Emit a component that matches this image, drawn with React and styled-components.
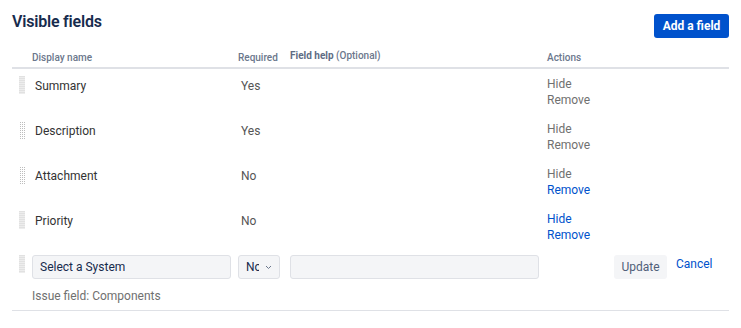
import React from "react";
import styled, { createGlobalStyle } from "styled-components";

const GlobalStyle = createGlobalStyle`
  body {
    margin: 0;
    background: #ffffff;
    font-family: Roboto, "Liberation Sans", Arial, sans-serif;
  }
`;

const COLUMNS = "20px 206px 52px 257px 1fr";

const fields = [
  { name: "Summary", required: "Yes", handle: "solid", hide: false, remove: false },
  { name: "Description", required: "Yes", handle: "dotted", hide: false, remove: false },
  { name: "Attachment", required: "No", handle: "dotted", hide: false, remove: true },
  { name: "Priority", required: "No", handle: "solid", hide: true, remove: true },
];

const App = () => {
  return (
    <Page>
      <GlobalStyle />
      <TopBar>
        <Title>Visible fields</Title>
        <PrimaryButton>Add a field</PrimaryButton>
      </TopBar>

      <HeaderRow>
        <span />
        <HeadCell>Display name</HeadCell>
        <HeadCell>Required</HeadCell>
        <HeadCell raised>
          <strong>Field help</strong> (Optional)
        </HeadCell>
        <HeadCell>Actions</HeadCell>
      </HeaderRow>

      {fields.map((f) => (
        <FieldRow key={f.name}>
          <Handle variant={f.handle} />
          <NameCell>{f.name}</NameCell>
          <RequiredCell>{f.required}</RequiredCell>
          <span />
          <Actions>
            <ActionLink active={f.hide}>Hide</ActionLink>
            <ActionLink active={f.remove}>Remove</ActionLink>
          </Actions>
        </FieldRow>
      ))}

      <EditRow>
        <Handle variant="solid" />
        <SelectBox wide>
          <SelectText>Select a System</SelectText>
        </SelectBox>
        <SelectBox>
          <SelectText clip>No</SelectText>
          <svg width="7" height="5" viewBox="0 0 7 5">
            <polyline
              points="1,1 3.5,3.5 6,1"
              fill="none"
              stroke="#6B778C"
              strokeWidth="1"
            />
          </svg>
        </SelectBox>
        <TextInput />
        <EditActions>
          <SecondaryButton>Update</SecondaryButton>
          <TextLink>Cancel</TextLink>
        </EditActions>
        <Hint>Issue field: Components</Hint>
      </EditRow>
    </Page>
  );
};

const Page = styled.div`
  padding: 0 12px;
  width: 717px;
`;

const TopBar = styled.div`
  display: flex;
  justify-content: space-between;
  align-items: flex-start;
  padding-top: 12px;
`;

const Title = styled.h2`
  margin: 0;
  font-size: 16px;
  line-height: 20px;
  font-weight: 600;
  letter-spacing: -0.2px;
  color: #172b4d;
`;

const PrimaryButton = styled.button`
  margin-top: 2px;
  height: 24px;
  width: 75px;
  padding: 0;
  border: none;
  border-radius: 3px;
  background: #0052cc;
  color: #ffffff;
  font-family: inherit;
  font-size: 12px;
  font-weight: 700;
`;

const HeaderRow = styled.div`
  display: grid;
  grid-template-columns: ${COLUMNS};
  align-items: start;
  padding: 11px 0 2px;
  border-bottom: 2px solid #dfe1e6;
`;

const HeadCell = styled.div`
  font-size: 10px;
  line-height: 14px;
  font-weight: 500;
  color: #6b778c;
  padding-top: ${(p) => (p.raised ? "0" : "2px")};

  strong {
    font-weight: 700;
    color: #5e6c84;
  }
`;

const FieldRow = styled.div`
  display: grid;
  grid-template-columns: ${COLUMNS};
  align-items: start;
  height: 45px;
  box-sizing: border-box;
  padding-top: 7px;
`;

const Handle = styled.div`
  margin-left: 7px;
  width: 6px;
  height: 18px;
  background-color: ${(p) => (p.variant === "dotted" ? "#bdbdbd" : "#e3e3e3")};
  background-image: ${(p) =>
    p.variant === "dotted"
      ? "linear-gradient(to right, #ffffff 1px, transparent 1px), linear-gradient(to bottom, #ffffff 1px, transparent 1px)"
      : "repeating-linear-gradient(to bottom, #e1e1e1 0 1px, #ededed 1px 2px)"};
  background-size: ${(p) => (p.variant === "dotted" ? "2px 2px" : "auto")};
`;

const NameCell = styled.div`
  padding: 2px 0 0 3px;
  font-size: 12px;
  line-height: 16px;
  color: #333333;
`;

const RequiredCell = styled(NameCell)`
  color: #555555;
`;

const Actions = styled.div`
  display: flex;
  flex-direction: column;
`;

const ActionLink = styled.a`
  font-size: 12px;
  line-height: 16px;
  color: ${(p) => (p.active ? "#0052cc" : "#707070")};
  cursor: pointer;
`;

const EditRow = styled.div`
  display: grid;
  grid-template-columns: ${COLUMNS};
  align-items: start;
  padding: 6px 0 6px;
  border-bottom: 1px solid #dfe1e6;
`;

const SelectBox = styled.div`
  box-sizing: border-box;
  width: ${(p) => (p.wide ? "199px" : "42px")};
  height: 24px;
  display: flex;
  align-items: center;
  gap: 6px;
  padding: 0 6px 0 7px;
  background: #f4f5f7;
  border: 1px solid #dfe1e6;
  border-radius: 3px;
`;

const SelectText = styled.span`
  font-size: 12px;
  color: #172b4d;
  overflow: hidden;
  white-space: nowrap;
  flex: none;
  width: ${(p) => (p.clip ? "13px" : "auto")};
`;

const TextInput = styled.input`
  box-sizing: border-box;
  width: 249px;
  height: 24px;
  margin: 0;
  background: #f4f5f7;
  border: 1px solid #dfe1e6;
  border-radius: 3px;
`;

const EditActions = styled.div`
  display: flex;
  align-items: flex-start;
  gap: 9px;
  padding-left: 67px;
`;

const SecondaryButton = styled.button`
  width: 53px;
  height: 24px;
  padding: 0;
  border: none;
  border-radius: 3px;
  background: #f4f5f7;
  color: #505f79;
  font-family: inherit;
  font-size: 12px;
`;

const TextLink = styled.a`
  margin-top: 1px;
  font-size: 12px;
  line-height: 16px;
  color: #0052cc;
  cursor: pointer;
`;

const Hint = styled.div`
  grid-column: 2 / 6;
  margin-top: 9px;
  font-size: 12px;
  line-height: 16px;
  color: #707070;
`;

export default App;
